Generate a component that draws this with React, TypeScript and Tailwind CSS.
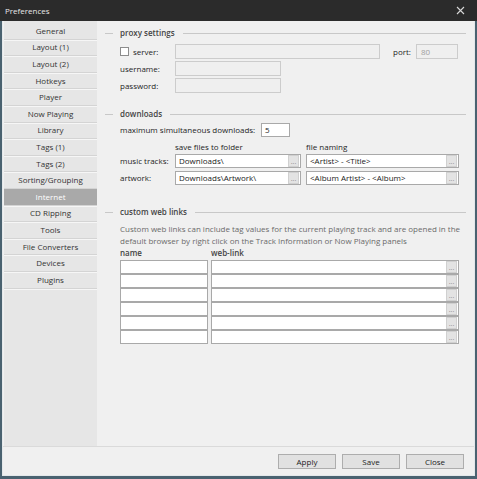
import React from "react";

const FONT = { fontFamily: '"Open Sans", "Noto Sans", sans-serif' };

const items = [
  "General",
  "Layout (1)",
  "Layout (2)",
  "Hotkeys",
  "Player",
  "Now Playing",
  "Library",
  "Tags (1)",
  "Tags (2)",
  "Sorting/Grouping",
  "Internet",
  "CD Ripping",
  "Tools",
  "File Converters",
  "Devices",
  "Plugins",
];

function Header({ label }: { label: string }) {
  return (
    <div className="flex items-center h-[14px]">
      <div className="w-[8px] h-px bg-[#c8c8c8]" />
      <div className="ml-[7px] mr-[8px] font-semibold text-[#444]">{label}</div>
      <div className="flex-1 h-px bg-[#c8c8c8]" />
    </div>
  );
}

function Dots() {
  return (
    <div className="ml-auto w-[11px] h-[12px] bg-[#e3e3e3] border border-[#d0d0d0] flex items-end justify-center text-[7px] leading-[9px] text-[#8a8a8a]">
      ...
    </div>
  );
}

function TextBox({ w, value }: { w: string; value: string }) {
  return (
    <div className={`${w} h-[14px] bg-white border border-[#a9a9a9] flex items-center pl-[3px] pr-px`}>
      <span className="text-[#1a1a1a] whitespace-nowrap">{value}</span>
      <Dots />
    </div>
  );
}

export default function App() {
  return (
    <div
      style={FONT}
      className="w-[477px] h-[479px] bg-[#4a6270] flex flex-col text-[8px] leading-[12px] text-[#1e1e1e] overflow-hidden"
    >
      {/* title bar */}
      <div className="h-[21px] bg-[#2b2b2b] flex items-center px-[5px] shrink-0">
        <span className="text-[#e8e8e8] text-[8px]">Preferences</span>
        <svg className="ml-auto mr-[7px]" width="9" height="9" viewBox="0 0 9 9">
          <path d="M1 1L8 8M8 1L1 8" stroke="#d8d8d8" strokeWidth="1.1" />
        </svg>
      </div>
      {/* body */}
      <div className="flex-1 mx-[2px] mb-[3px] border-l border-r border-b border-[#e4e8ea] bg-[#f0f0f0] flex flex-col">
        <div className="flex flex-1 min-h-0">
          {/* sidebar */}
          <div className="w-[93px] ml-px bg-[#e6e6e6] pt-[2px] flex flex-col shrink-0">
            {items.map((it) => (
              <div
                key={it}
                className={`h-[16.6px] flex items-center justify-center border-b border-[#d4d4d4] shadow-[0_1px_0_#f6f6f6] ${
                  it === "Internet" ? "bg-[#a9a9a9] text-white" : "text-[#333]"
                }`}
              >
                {it}
              </div>
            ))}
          </div>
          {/* content */}
          <div className="flex-1 pl-[8px] pr-[8px] pt-[5px]">
            <Header label="proxy settings" />
            <div className="pl-[15px] mt-[4px]">
              <div className="flex items-center h-[15px]">
                <div className="w-[9px] h-[9px] border border-[#8c8c8c] bg-white" />
                <span className="ml-[4px] w-[42px]">server:</span>
                <div className="w-[205px] h-[15px] border border-[#cccccc] bg-[#efefef]" />
                <span className="ml-[13px] w-[23px]">port:</span>
                <div className="w-[42px] h-[15px] border border-[#cccccc] bg-[#efefef] text-[#a0a0a0] pl-[4px] leading-[13px]">
                  80
                </div>
              </div>
              <div className="flex items-center h-[15px] mt-[2px]">
                <span className="w-[55px]">username:</span>
                <div className="w-[106px] h-[15px] border border-[#cccccc] bg-[#efefef]" />
              </div>
              <div className="flex items-center h-[15px] mt-[2px]">
                <span className="w-[55px]">password:</span>
                <div className="w-[106px] h-[15px] border border-[#cccccc] bg-[#efefef]" />
              </div>
            </div>

            <div className="mt-[14px]">
              <Header label="downloads" />
            </div>
            <div className="pl-[15px] mt-[2px]">
              <div className="flex items-center h-[14px]">
                <span className="w-[141px]">maximum simultaneous downloads:</span>
                <div className="w-[29px] h-[14px] bg-white border border-[#a9a9a9] pl-[3px] leading-[12px]">5</div>
              </div>
              <div className="flex items-center h-[14px] mt-[3px]">
                <span className="ml-[55px] w-[131px]">save files to folder</span>
                <span>file naming</span>
              </div>
              <div className="flex items-center h-[14px]">
                <span className="w-[55px]">music tracks:</span>
                <TextBox w="w-[126px]" value="Downloads\" />
                <div className="w-[5px]" />
                <TextBox w="w-[153px]" value="<Artist> - <Title>" />
              </div>
              <div className="flex items-center h-[14px] mt-[3px]">
                <span className="w-[55px]">artwork:</span>
                <TextBox w="w-[126px]" value="Downloads\Artwork\" />
                <div className="w-[5px]" />
                <TextBox w="w-[153px]" value="<Album Artist> - <Album>" />
              </div>
            </div>

            <div className="mt-[20px]">
              <Header label="custom web links" />
            </div>
            <div className="pl-[15px] mt-[4px]">
              <div className="text-[#6a6a6a] leading-[12px] pr-[4px]">
                Custom web links can include tag values for the current playing track and are opened in the
                <br />
                default browser by right click on the Track Information or Now Playing panels
              </div>
              <div className="flex h-[12px] font-semibold text-[#444]">
                <span className="w-[91px]">name</span>
                <span>web-link</span>
              </div>
              <div className="mt-px flex flex-col">
                {[0, 1, 2, 3, 4, 5].map((i) => (
                  <div key={i} className="flex h-[14px]">
                    <div className="w-[88px] h-[14px] bg-white border border-[#a9a9a9]" />
                    <div className="w-[3px]" />
                    <div className="w-[248px] h-[14px] bg-white border border-[#a9a9a9] flex items-center pr-px">
                      <Dots />
                    </div>
                  </div>
                ))}
              </div>
            </div>
          </div>
        </div>
        {/* bottom bar */}
        <div className="h-[29px] shrink-0 border-t border-[#dadada] flex items-center justify-end gap-[6px] pr-[10px] pt-[1px]">
          {["Apply", "Save", "Close"].map((b) => (
            <div
              key={b}
              className="w-[58px] h-[15px] bg-[#e1e1e1] border border-[#adadad] flex items-center justify-center text-[#222]"
            >
              {b}
            </div>
          ))}
        </div>
      </div>
    </div>
  );
}
